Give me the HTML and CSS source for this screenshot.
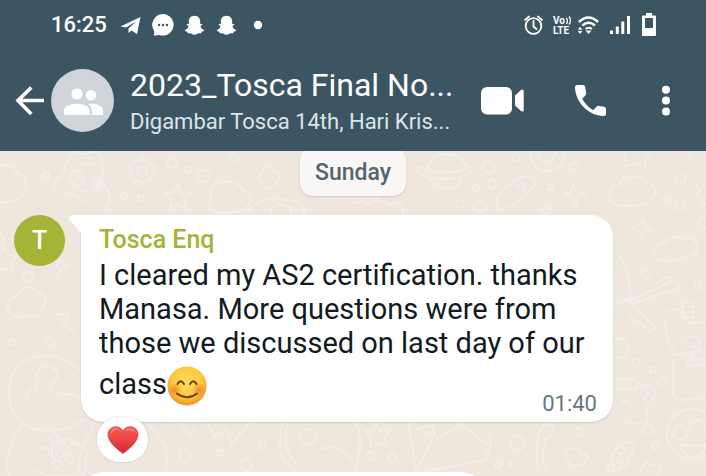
FILE: index.html
```html
<!DOCTYPE html>
<html lang="en">
<head>
<meta charset="utf-8">
<meta name="viewport" content="width=device-width, initial-scale=1">
<title>2023_Tosca Final No…</title>
<link rel="stylesheet" href="styles.css">
</head>
<body>
<header class="top">
  <div class="status">
    <span class="clock">16:25</span>
    <svg class="notices" width="144" height="28" viewBox="118 11 144 28" fill="#fff" aria-hidden="true">
      <path d="M119.500 26.500 139.500 17 136 34 130.500 30.500 127.500 33V28.500L135 21.500 125 27.500Z"/>
      <path d="M162 14a11 10.800 0 1 1-4 21l-5 .8.300-4.500A11 11 0 0 1 162 14Z"/>
      <g fill="#3b5563"><circle cx="158" cy="25" r="1.200"/><circle cx="162" cy="25" r="1.200"/><circle cx="166" cy="25" r="1.200"/></g>
      <path id="ghost" d="M193.500 15.700c4 0 5.700 2.900 5.700 6v2.200c.8.300 1.900-.4 2.100.4.200.9-1.600 1.200-1.800 2 .5 2.200 2 3.200 3.700 3.800.3 1.300-1.600 1.500-2.700 1.800l-.4 1.300c-1.200 0-2.500-.3-3.600.5-2 1.500-4 1.500-6 0-1.100-.8-2.400-.5-3.600-.5l-.4-1.300c-1.100-.3-3-.5-2.700-1.800 1.700-.6 3.200-1.600 3.700-3.800-.2-.8-2-1.100-1.800-2 .2-.8 1.300-.1 2.100-.4v-2.200c0-3.100 1.700-6 5.700-6Z"/>
      <use href="#ghost" x="32"/>
      <circle cx="257" cy="25" r="4.200"/>
    </svg>
    <svg class="system" width="134" height="28" viewBox="523 11 134 28" fill="none" stroke="#fff" stroke-width="1.800" aria-hidden="true">
      <circle cx="533.500" cy="26" r="7.800"/><path d="M533.500 21v5.500l3 2.500M525 20l4-3.500M542 20l-4-3.500" stroke-linecap="round"/>
      <g fill="#fff" stroke="none" class="lte"><text x="553" y="24">Vo</text><text x="553" y="34">LTE</text></g>
      <path d="M566.500 18q2 3 0 6M569 16.500q3 4 0 8" stroke-width="1.300"/>
      <path d="M579 22q9.500-9 19 0M582.500 25.500q6-5.500 12.500 0" stroke-width="2.600"/><path d="M585.500 29q3-2.500 6.500 0" stroke-width="2"/>
      <path fill="#fff" stroke="none" d="M585.500 30.500h6l-3 3.500ZM577.800 29.800l2.300-3 2.300 3ZM577.800 31l2.300 3 2.300-3Z"/>
      <path d="M611.500 30.500V34M617.300 26.500V34M622.800 21.500V34M628.500 16V34" stroke-width="3"/>
      <path fill="#fff" stroke="none" fill-rule="evenodd" d="M643 15.500h3V13h6v2.500h3q1 0 1 1V35q0 1-1 1h-12q-1 0-1-1V16.500q0-1 1-1ZM645 18v10h8V18Z"/>
    </svg>
  </div>
  <div class="toolbar">
    <button class="icon-btn" type="button" aria-label="Back"><svg width="30" height="30" viewBox="15 86 30 30" fill="none" stroke="#fff" stroke-width="3.600"><path d="M44 100.500H18M31.300 87.500 18 100.500l13.300 13.500"/></svg></button>
    <span class="group-avatar"><svg width="40" height="28" viewBox="62 86 40 28" fill="#fff" aria-hidden="true"><circle cx="76" cy="93" r="5.600"/><circle cx="90" cy="94.200" r="5.300"/><path d="M63 114v-4.500c0-4.500 7-6.800 12.800-6.800S88.700 105 88.700 109.500V114ZM87 103c7-1 15 1.500 15 6.500v4.500H90.800v-4.500c0-3-1.300-5-3.800-6.500Z"/></svg></span>
    <div class="titles">
      <h1>2023_Tosca Final No...</h1>
      <p>Digambar Tosca 14th, Hari Kris...</p>
    </div>
    <nav class="actions">
      <button class="icon-btn" type="button" aria-label="Video call"><svg width="44" height="28" viewBox="482 87 44 28" fill="#fff"><rect x="482" y="87" width="31" height="27.500" rx="6"/><path d="m516 95.500 6-5.500q2.700-1.500 2.700 1v19q0 2.500-2.700 1l-6-5.500Z"/></svg></button>
      <button class="icon-btn" type="button" aria-label="Voice call"><svg width="32" height="32" viewBox="575 86 32 32" fill="#fff"><path d="M577.500 86h5.500q2 0 2.300 2.200.2 3 .8 5.200.5 1.800-.8 3.100l-3.100 3.300q4 7.500 11 11.400l3.500-3.600q1.200-1.200 3-.7 2.600.7 4.300.8 2 .3 2 2.500v4.500q0 2.400-2.500 2.300C588 116.500 575.500 103 575 88.500q0-2.500 2.500-2.500Z"/></svg></button>
      <button class="icon-btn more" type="button" aria-label="More options"><svg width="10" height="32" viewBox="661 85 10 32" fill="#fff"><circle cx="666" cy="89.800" r="4"/><circle cx="666" cy="100.600" r="4"/><circle cx="666" cy="111.500" r="4"/></svg></button>
    </nav>
  </div>
</header>
<main class="chat">
  <svg class="wallpaper" viewBox="0 151 706 325" preserveAspectRatio="xMinYMin slice" aria-hidden="true">
    <path d="M0 166q14-4 17 7 12 4 8 18-5 12-25 11M56 191q-7-11 9-17-3-12 5-15l3-7q14 4 24-1l4 9q6 13-3 20 11 6 12 19l-5 12M60 192q16 1 25 12M70 180q8 13 23 12l9-10"/>
    <circle cx="77" cy="178" r="7"/><circle cx="97" cy="184" r="6"/><circle cx="77" cy="178" r="2"/><circle cx="97" cy="184" r="2"/>
    <path d="M86 158h7M81 165q7-4 15 0"/>
    <circle cx="142" cy="171" r="11"/><circle cx="142" cy="171" r="14" stroke-dasharray="5 4"/><circle cx="142" cy="171" r="5"/>
    <circle cx="172" cy="163" r="5"/><circle cx="203" cy="176" r="6"/><circle cx="188" cy="170" r="3"/><circle cx="124" cy="196" r="3"/><circle cx="141" cy="198" r="3"/><circle cx="46" cy="175" r="3"/><circle cx="234" cy="158" r="4"/>
    <path d="m178 184 3 9 10 0-7 7 3 9-9-4-8 4 1-9-6-7 9-1ZM263 171q8-11 10 0 13 0 3 13l-9 6q-13-15-4-19ZM211 198q-4-15 13-16 16-1 19 9 10 2 6 14-7 10-34 7-9-3-4-14ZM245 214q16-20 41-14 23 0 17 15M270 214q5-14 15-9 8 1 6 10"/>
    <path d="M353 204q10-5 14 0 15-7 24 1 14-8 12 10M376 197l4 4M427 169q5-16 20-15 16 1 20 15M427 169q-10-4-10 1 1 8 28 9 25-1 27-9 0-5-5-1M427 169q20 7 40 0M430 179q6 10 17 10 11-1 16-10M497 207q-4-16 24-29 18-6 13 8-7 9-19 18-15 9-18 3ZM515 184q8 2 10 10M521 181l6 8"/>
    <circle cx="489" cy="167" r="6"/><circle cx="516" cy="157" r="4"/><circle cx="476" cy="188" r="3"/><circle cx="492" cy="184" r="4"/><circle cx="460" cy="204" r="4"/><circle cx="480" cy="207" r="6"/><circle cx="574" cy="167" r="4"/><circle cx="550" cy="187" r="3"/><circle cx="546" cy="210" r="4"/>
    <path d="M530 151q1 20 17 20 19-2 17-20M538 151q0 11 9 11 8-1 9-11M573 184l4 8 9 2-8 3-2 9-4-9-9-3 8-2ZM623 151l4 14-3 2 12-4 9 4 1-9 5-7M610 193q2-9 10-8 0-8 10-8 11-3 14 5 14 2 11 13-8 12-33 11-15-3-12-13Z"/>
    <circle cx="681" cy="179" r="5"/><circle cx="666" cy="200" r="3"/><circle cx="680" cy="205" r="5"/>
    <path d="m696 186 4 5-5 5 7 2v7l5-2M684 162l9-9M643 218l3 8 8 4-9 1-3 9-3-9-8-4 8-2ZM655 250q1-7 11-8 5-8 17-3 13-3 14 7 2 11-18 12-9 5-20 1-8-3-4-9ZM616 255q11 0 15 42l-15 8M627 302l48-22q8 8 0 9l-43 15ZM655 285l9-7q8-4 6 4l-8 5"/>
    <circle cx="704" cy="223" r="5"/><circle cx="646" cy="274" r="4"/><circle cx="698" cy="286" r="3"/><circle cx="688" cy="307" r="6"/>
    <path d="M0 233q8 8 0 15M0 254l5-6 4 7 8 2-6 6 2 8-8-3-5 3M10 313q-7-14 7-17 7-15 20-4 13 3 6 16-5 13-15 7-14 5-18-2ZM56 278q8-15 20-14M57 314h12l-6 11 13 7"/>
    <circle cx="61" cy="265" r="4"/><circle cx="28" cy="277" r="5"/><circle cx="50" cy="342" r="5"/><circle cx="12" cy="342" r="3"/>
    <path d="M9 398q-3-35 30-42 22-3 42 15M9 398q4 31 39 33 21 0 34-11M33 402q-12-5-4-11 8-5 7-13 2-17 17-10 10 8-3 17-2 8 14 9 14-1 17 6M36 393q1-12 5-16M9 476q-7-24 14-53M34 448h13l5 10v-12q10-12 24-3 16 5 9 18 5 15-11 15h-27q-5-5-13-4M80 476q-5-23 13-48"/>
    <circle cx="54" cy="438" r="4"/><circle cx="68" cy="443" r="4"/><circle cx="60" cy="453" r="4"/><circle cx="70" cy="459" r="4"/><circle cx="57" cy="464" r="4"/>
    <path d="M147 423q26 22 18 50M181 423l9 13 6-9M209 424l5 13 13-8 5 15 18-21M283 423q-10 35 12 48M288 423q-8 28 10 42M355 423q11 17-1 48M318 450q19-9 34 10"/>
    <circle cx="308" cy="437" r="8"/><circle cx="185" cy="456" r="6"/><circle cx="220" cy="453" r="3"/><circle cx="246" cy="465" r="6"/><circle cx="262" cy="446" r="3"/>
    <path d="m376 423 3 8 12-1-7 9 4 7-10-3-7 4v-9l-6-7 9-1ZM408 423l8 48 18-36-20-6 18-4 5 14 24-15 29 23-5 13-30 6-31 5M489 430l2 16-10 9"/>
    <circle cx="371" cy="456" r="4"/><circle cx="392" cy="457" r="4"/><circle cx="518" cy="443" r="7"/><circle cx="498" cy="465" r="3"/><circle cx="511" cy="464" r="2"/><circle cx="579" cy="432" r="4"/><circle cx="648" cy="430" r="5"/><circle cx="655" cy="446" r="3"/>
    <path d="M538 472q-4-45 8-48l7 2-1 10-7 3q-5 22 3 35M566 457q-3-10 6-8 5-5 9 4 10 2 4 10l-13 4ZM607 470l10-26q14-5 17 2l-7 19q-11 9-20 5ZM638 474l7-12 17 6-5 8"/><circle cx="621" cy="450" r="4"/><circle cx="617" cy="465" r="4"/>
    <path d="M615 340q13-5 13 8 0 12-12 10M613 379h20q9 3 2 10h-22M635 391q4-8 14-5 8 3 5 19-9-2-7 18-15 2-25-2M620 404q6-7 9 1M644 401l5-10M630 300l25 28-4 4-23-17M665 321q1 22 11 34M666 313q13-8 17 3l6 7 17-1M683 306h10v12h-10ZM674 355l32-5M673 360v35q1 6 11 5l22-2M682 341q15-11 18 2 0 7-10 17l16-1M688 347q6-4 8 1l-10 17h20"/>
    <circle cx="636" cy="363" r="4"/><circle cx="653" cy="370" r="3"/><circle cx="662" cy="382" r="4"/><circle cx="648" cy="398" r="4"/>
    <circle cx="692" cy="434" r="25"/><path d="M673 436q1-10 8-11 7 2 6 12-7 5-14-1ZM691 431q-4-9 4-9 5-5 8 2l3 2M681 444q15 4 25 0-2 11-12 13-11-1-13-13"/>
  </svg>
  <span class="date">Sunday</span>
  <article class="message">
    <span class="avatar">T</span>
    <div class="bubble">
      <svg class="tail" width="18" height="24" viewBox="0 0 18 24" fill="#fff" aria-hidden="true"><path d="M18 0H4Q-1 1 2 5L13 18V24H18Z"/></svg>
      <h2>Tosca Enq</h2>
      <p class="body">I cleared my AS2 certification. thanks Manasa. More questions were from those we discussed on last day of our class<svg class="smile" width="40" height="40" viewBox="0 0 40 40" role="img" aria-label="Smiling face">
        <defs><radialGradient id="face" cx=".5" cy=".4" r=".6"><stop offset="0" stop-color="#ffdc5f"/><stop offset=".65" stop-color="#fdc840"/><stop offset="1" stop-color="#ed9322"/></radialGradient><radialGradient id="blush"><stop offset="0" stop-color="#f5652a" stop-opacity=".75"/><stop offset="1" stop-color="#f5752a" stop-opacity="0"/></radialGradient></defs>
        <circle cx="20" cy="20" r="19.500" fill="url(#face)"/><circle cx="8" cy="24" r="7" fill="url(#blush)"/><circle cx="32" cy="24" r="7" fill="url(#blush)"/>
        <path d="M10.500 18q3-5.500 6.500 0M23 18q3.500-5.500 6.500 0M10 27.500q10 7.500 20 0" fill="none" stroke="#6b430f" stroke-width="2" stroke-linecap="round"/></svg><time>01:40</time></p>
    </div>
    <button class="reaction" type="button" aria-label="Heart reaction"><svg width="32" height="28" viewBox="0 0 32 28"><defs><linearGradient id="heart" x2="0" y2="1"><stop stop-color="#f5605b"/><stop offset=".5" stop-color="#ee4142"/><stop offset="1" stop-color="#d5282f"/></linearGradient></defs><path d="M16 27.500C10 23 1 16 1 8.500 1 0 12-2 16 5c4-7 15-5 15 3.500C31 16 22 23 16 27.500Z" fill="url(#heart)" stroke="#c9484a" stroke-width=".8"/><path d="M4 7q2-4 6-4M20 4q4-2 7 1" stroke="#fa7d78" stroke-width="1.500" fill="none" stroke-linecap="round"/></svg></button>
  </article>
  <div class="next-bubble"></div>
</main>
</body>
</html>
```
FILE: styles.css
```css
* { box-sizing: border-box; }
html, body { height: 100%; }
body {
  margin: 0;
  display: flex;
  flex-direction: column;
  overflow: hidden;
  background: #efe7de;
  color: #111b21;
  font-family: Roboto, "Liberation Sans", sans-serif;
}
h1, h2, p { margin: 0; font-weight: 400; }
svg { display: block; flex: none; }

.top { flex: none; background: #3b5563; color: #fff; }
.status { display: flex; align-items: center; height: 50px; padding: 0 49px 0 51px; }
.clock { font-size: 22px; line-height: 28px; font-weight: 500; }
.notices { margin-left: 12px; }
.system { margin-left: auto; }
.lte { font-size: 10px; font-weight: 700; }

.toolbar { display: flex; align-items: center; height: 101px; padding: 0 31px 0 15px; }
.icon-btn { border: 0; padding: 0; background: none; flex: none; }
.more { padding: 0 4px; }
.group-avatar {
  display: flex;
  align-items: center;
  justify-content: center;
  flex: none;
  width: 63px;
  height: 63px;
  margin: 0 16px 0 6px;
  border-radius: 50%;
  background: #cfd5da;
}
.titles { flex: 1; min-width: 0; padding-top: 2px; white-space: nowrap; }
.titles h1 { font-size: 32px; line-height: 38px; }
.titles p { padding-top: 2px; font-size: 22px; line-height: 32px; color: #dce5ea; }
.actions { display: flex; align-items: center; gap: 50px; }

.chat {
  position: relative;
  flex: 1;
  min-height: 0;
  display: flex;
  flex-direction: column;
  overflow: hidden;
}
.wallpaper {
  position: absolute;
  inset: 0;
  width: 100%;
  height: 100%;
  fill: none;
  stroke: #f4ede6;
  stroke-width: 2;
  stroke-linejoin: round;
}
.date {
  position: relative;
  flex: none;
  align-self: center;
  margin-top: -4px;
  padding: 9px 15px 7px;
  border-radius: 13px;
  background: #f8f7f5;
  box-shadow: 0 1px 2px #0002;
  color: #54656f;
  font-size: 23px;
  font-weight: 500;
  line-height: 33px;
}
.message {
  position: relative;
  flex: none;
  display: flex;
  align-items: flex-start;
  margin: 19px 93px 50px 14px;
}
.avatar {
  flex: none;
  width: 51px;
  height: 51px;
  margin-right: 16px;
  border-radius: 50%;
  background: #a5b337;
  color: #fff;
  font-size: 25px;
  font-weight: 500;
  line-height: 51px;
  text-align: center;
}
.bubble {
  position: relative;
  flex: 1;
  padding: 6px 16px 0 18px;
  border-radius: 0 22px 22px 22px;
  background: #fff;
  box-shadow: 0 1px 2px #0002;
}
.tail { position: absolute; top: 0; left: -13px; }
.bubble h2 { color: #a5b337; font-size: 25px; font-weight: 500; line-height: 37px; }
.body { display: flow-root; font-size: 29px; line-height: 34px; }
.smile { display: inline-block; margin-top: 6px; vertical-align: -12px; }
time {
  float: right;
  margin: 32px 0 6px;
  color: #667781;
  font-size: 22px;
  line-height: 24px;
}
.reaction {
  position: absolute;
  left: 83px;
  top: 202px;
  display: flex;
  align-items: center;
  justify-content: center;
  width: 51px;
  height: 45px;
  border: 0;
  border-radius: 22px;
  padding: 0;
  background: #fff;
  box-shadow: 0 0 1px 1px #0001;
}
.next-bubble {
  flex: none;
  height: 60px;
  margin: 0 222px 0 81px;
  border-radius: 22px;
  background: #fff;
}
```
